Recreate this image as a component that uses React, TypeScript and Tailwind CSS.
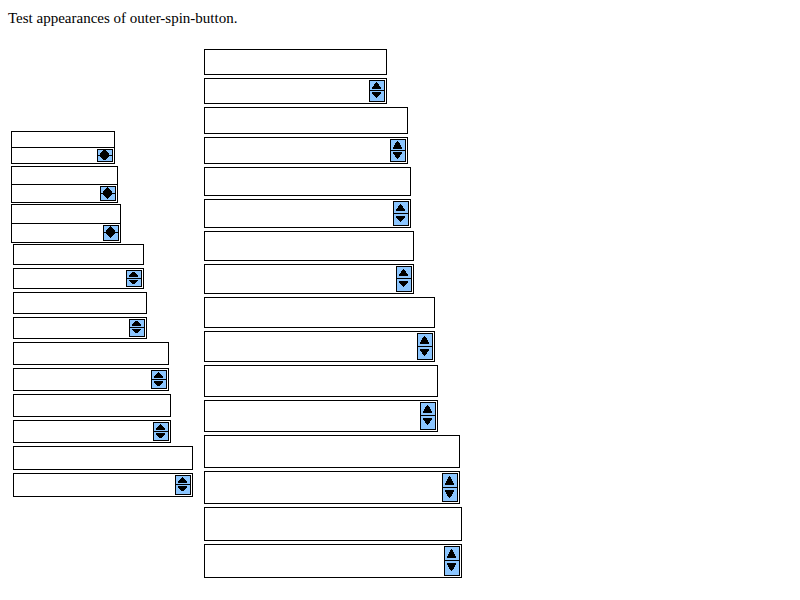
type Row = {
  width: string;
  height: string;
  gap: string;
  upBox: string;
  up: number;
  down: number;
  pad: "none" | "small" | "large";
};

// Each row describes a plain field followed by the same field with a spin button.
const smallFonts: Row[] = [
  { width: "w-[104px]", height: "h-[17px]", gap: "mb-[2px]", upBox: "h-[5px]", up: 5, down: 5, pad: "none" },
  { width: "w-[107px]", height: "h-[19px]", gap: "mb-px", upBox: "h-[6px]", up: 6, down: 6, pad: "none" },
  { width: "w-[110px]", height: "h-[20px]", gap: "mb-px", upBox: "h-[6px]", up: 6, down: 6, pad: "none" },
  { width: "w-[131px]", height: "h-[21px]", gap: "mb-[3px]", upBox: "h-[7px]", up: 5, down: 4, pad: "small" },
  { width: "w-[134px]", height: "h-[22px]", gap: "mb-[3px]", upBox: "h-[7px]", up: 5, down: 4, pad: "small" },
  { width: "w-[156px]", height: "h-[23px]", gap: "mb-[3px]", upBox: "h-[8px]", up: 6, down: 5, pad: "small" },
  { width: "w-[158px]", height: "h-[23px]", gap: "mb-[3px]", upBox: "h-[8px]", up: 6, down: 5, pad: "small" },
  { width: "w-[180px]", height: "h-[24px]", gap: "mb-0", upBox: "h-[8px]", up: 6, down: 5, pad: "small" },
];

const largeFonts: Row[] = [
  { width: "w-[183px]", height: "h-[26px]", gap: "mb-[3px]", upBox: "h-[9px]", up: 7, down: 6, pad: "small" },
  { width: "w-[204px]", height: "h-[27px]", gap: "mb-[3px]", upBox: "h-[10px]", up: 8, down: 7, pad: "small" },
  { width: "w-[207px]", height: "h-[29px]", gap: "mb-[3px]", upBox: "h-[11px]", up: 7, down: 6, pad: "large" },
  { width: "w-[210px]", height: "h-[30px]", gap: "mb-[3px]", upBox: "h-[11px]", up: 7, down: 6, pad: "large" },
  { width: "w-[231px]", height: "h-[31px]", gap: "mb-[3px]", upBox: "h-[12px]", up: 8, down: 7, pad: "large" },
  { width: "w-[234px]", height: "h-[32px]", gap: "mb-[3px]", upBox: "h-[12px]", up: 8, down: 7, pad: "large" },
  { width: "w-[256px]", height: "h-[33px]", gap: "mb-[3px]", upBox: "h-[13px]", up: 9, down: 8, pad: "large" },
  { width: "w-[258px]", height: "h-[34px]", gap: "mb-0", upBox: "h-[13px]", up: 9, down: 8, pad: "large" },
];

const upPad = { none: "pt-0", small: "pt-px", large: "pt-[2px]" };
const downPad = { none: "-mt-px", small: "pt-px", large: "pt-[2px]" };

// Half the width of an arrow at row i, counted from its tip.
function halfWidth(i: number, rows: number) {
  return rows <= 5 ? Math.min(4, i + 1) : Math.ceil((i * 4) / (rows - 1));
}

function Arrow({ rows, down = false }: { rows: number; down?: boolean }) {
  return (
    <svg
      width="9"
      height={rows}
      viewBox={`0 0 9 ${rows}`}
      className="block shrink-0"
      shapeRendering="crispEdges"
      aria-hidden="true"
    >
      {Array.from({ length: rows }, (_, i) => {
        const half = halfWidth(i, rows);
        return <rect key={i} x={4 - half} y={down ? rows - 1 - i : i} width={half * 2 + 1} height="1" />;
      })}
    </svg>
  );
}

function SpinButton({ row }: { row: Row }) {
  return (
    <div className="flex w-4 shrink-0 flex-col border border-black bg-[#8cc6ff]">
      <button
        type="button"
        aria-label="Increase"
        className={`flex shrink-0 items-start pl-[2px] ${row.upBox} ${upPad[row.pad]}`}
      >
        <Arrow rows={row.up} />
      </button>
      <div className="h-px shrink-0 bg-black" />
      <button
        type="button"
        aria-label="Decrease"
        className={`flex min-h-0 flex-1 items-start pl-[2px] ${downPad[row.pad]}`}
      >
        <Arrow rows={row.down} down />
      </button>
    </div>
  );
}

function Field({ row, name, spin }: { row: Row; name: string; spin?: boolean }) {
  return (
    <div className={`flex border border-black p-px ${row.width} ${row.height}`}>
      <input
        type="text"
        inputMode="numeric"
        aria-label={name}
        className="h-full min-w-0 flex-1 bg-transparent text-xs outline-none"
      />
      {spin && <SpinButton row={row} />}
    </div>
  );
}

function Column({ rows, name }: { rows: Row[]; name: string }) {
  return (
    <div>
      {rows.map((row, i) => (
        <div
          key={i}
          className={`flex flex-col ${row.gap} ${row.pad === "none" ? "-space-y-px" : "gap-[3px]"} ${
            name === "Small" && row.pad !== "none" ? "ml-[2px]" : ""
          }`}
        >
          <Field row={row} name={`${name} field ${i + 1}`} />
          <Field row={row} name={`${name} spin field ${i + 1}`} spin />
        </div>
      ))}
    </div>
  );
}

export default function App() {
  return (
    <main className="min-h-screen bg-white p-2 font-['Liberation_Serif',serif] text-[15px] leading-5 text-black">
      <p>Test appearances of outer-spin-button.</p>
      <div className="mt-[21px] flex items-center gap-[11px] pl-[3px]">
        <div className="pt-px">
          <Column rows={smallFonts} name="Small" />
        </div>
        <Column rows={largeFonts} name="Large" />
      </div>
    </main>
  );
}
